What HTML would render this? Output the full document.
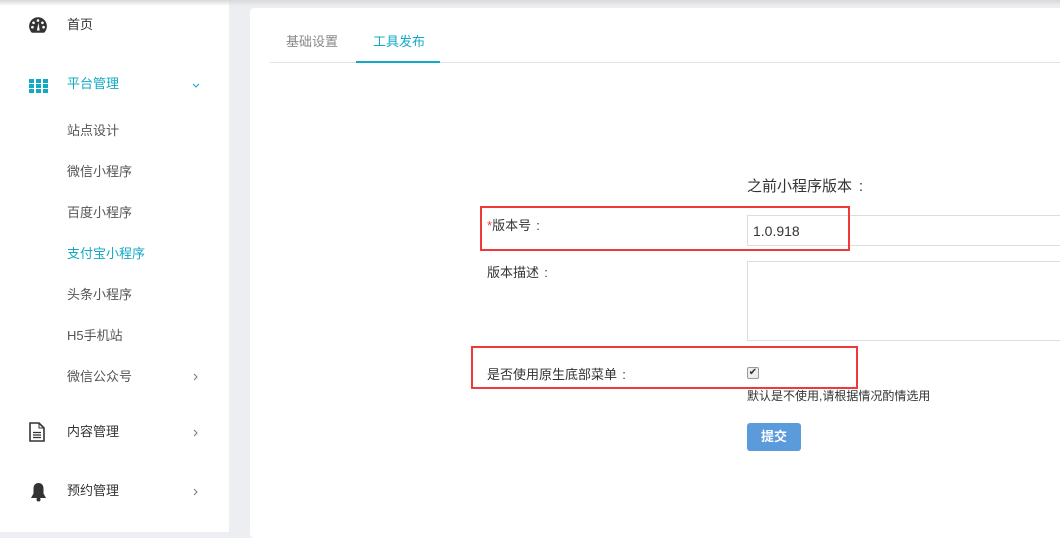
<!DOCTYPE html>
<html><head><meta charset="utf-8"><style>
*{margin:0;padding:0;box-sizing:border-box}
body{width:1060px;height:532px;overflow:hidden;background:#eceef2;font-family:"Liberation Sans","Noto Sans CJK SC",sans-serif;font-size:13px;color:#333;position:relative;line-height:18px}
.side{position:absolute;left:0;top:0;width:229px;height:532px;background:#fff}
.shadow{position:absolute;left:0;top:0;width:1060px;height:6px;background:linear-gradient(#d8d8d8,rgba(236,238,242,0));}
.it{position:absolute;left:67px;font-size:13px;color:#333}
.sub{position:absolute;left:67px;font-size:13px;color:#555}
.arr{position:absolute;left:193px}
.panel{position:absolute;left:250px;top:8px;width:820px;height:530px;background:#fff;border-radius:4px}
.abs{position:absolute}
.red{position:absolute;border:2px solid #f03a3a}
.c{display:inline-block;width:14px;text-align:center}
</style></head><body>
<div class="side">
<svg class="abs" style="left:28px;top:16px" width="20" height="18" viewBox="0 0 18 16"><path d="M9 1a8 8 0 0 0-8 8c0 2.5 1 4.5 2.5 6h11C16 13.5 17 11.5 17 9a8 8 0 0 0-8-8z" fill="#333"/><circle cx="5" cy="6" r="1.2" fill="#fff"/><circle cx="9" cy="4" r="1.2" fill="#fff"/><circle cx="13" cy="6" r="1.2" fill="#fff"/><circle cx="4" cy="10" r="1.2" fill="#fff"/><circle cx="14" cy="10" r="1.2" fill="#fff"/><path d="M8 13l1.5-7 1 7z" fill="#fff"/></svg>
<div class="it" style="top:16px">首页</div>
<svg class="abs" style="left:29px;top:79px" width="19" height="14"><g fill="#12a9c4"><rect x="0" y="0" width="5" height="4"/><rect x="7" y="0" width="5" height="4"/><rect x="14" y="0" width="5" height="4"/><rect x="0" y="5" width="5" height="4"/><rect x="7" y="5" width="5" height="4"/><rect x="14" y="5" width="5" height="4"/><rect x="0" y="10" width="5" height="4"/><rect x="7" y="10" width="5" height="4"/><rect x="14" y="10" width="5" height="4"/></g></svg>
<div class="it" style="top:75px;color:#12a9c4">平台管理</div>
<svg class="abs" style="left:192px;top:83px" width="8" height="6"><path d="M1 1l3 3 3-3" stroke="#12a9c4" fill="none"/></svg>
<div class="sub" style="top:122px">站点设计</div>
<div class="sub" style="top:163px">微信小程序</div>
<div class="sub" style="top:204px">百度小程序</div>
<div class="sub" style="top:245px;color:#12a9c4">支付宝小程序</div>
<div class="sub" style="top:286px">头条小程序</div>
<div class="sub" style="top:327px">H5手机站</div>
<div class="sub" style="top:368px">微信公众号</div>
<svg class="arr" style="top:373px" width="6" height="8"><path d="M1 1l3 3-3 3" stroke="#777" fill="none"/></svg>
<svg class="abs" style="left:29px;top:422px" width="17" height="20"><path d="M1 1h9l5 5v13H1z" fill="none" stroke="#333" stroke-width="1.6"/><path d="M10 1v5h5" fill="none" stroke="#333"/><path d="M4 10.5h8M4 13h8M4 15.5h8" stroke="#333" stroke-width="1.2"/></svg>
<div class="it" style="top:423px">内容管理</div>
<svg class="arr" style="top:429px" width="6" height="8"><path d="M1 1l3 3-3 3" stroke="#777" fill="none"/></svg>
<svg class="abs" style="left:29px;top:482px" width="19" height="20"><path d="M9.5 1c-3 0-5 2.2-5 5.5v5L2 16h15l-2.5-4.5v-5C14.5 3.2 12.5 1 9.5 1z" fill="#333"/><circle cx="9.5" cy="17.5" r="2" fill="#333"/></svg>
<div class="it" style="top:482px">预约管理</div>
<svg class="arr" style="top:488px" width="6" height="8"><path d="M1 1l3 3-3 3" stroke="#777" fill="none"/></svg>
</div>
<div class="shadow"></div>
<div class="panel">
<div class="abs" style="left:20px;top:54px;width:800px;height:1px;background:#e1e3e6"></div>
<div class="abs" style="left:36px;top:25px;color:#888">基础设置</div>
<div class="abs" style="left:123px;top:25px;color:#12a9c4">工具发布</div>
<div class="abs" style="left:106px;top:53px;width:84px;height:2px;background:#12a9c4"></div>
</div>
<div class="abs" style="left:747px;top:178px;font-size:15px;color:#333">之前小程序版本<span class="c" style="width:18px">:</span></div>
<div class="abs" style="left:487px;top:217px"><span style="color:#f03a3a">*</span>版本号<span class="c">:</span></div>
<div class="abs" style="left:747px;top:215px;width:320px;height:31px;border:1px solid #ddd;padding:6px 5px;font-size:14px">1.0.918</div>
<div class="abs" style="left:487px;top:264px">版本描述<span class="c">:</span></div>
<div class="abs" style="left:747px;top:261px;width:320px;height:80px;border:1px solid #ddd"></div>
<div class="abs" style="left:487px;top:366px">是否使用原生底部菜单<span class="c">:</span></div>
<div class="abs" style="left:747px;top:367px;width:12px;height:12px;border:1px solid #999;border-radius:2px;background:#eee;font-size:10px;line-height:10px;text-align:center">✔</div>
<div class="abs" style="left:747px;top:387px;font-size:12px">默认是不使用,请根据情况酌情选用</div>
<div class="abs" style="left:747px;top:423px;width:54px;height:28px;background:#5b9bdc;border-radius:3px;color:#fff;text-align:center;line-height:28px;font-weight:bold">提交</div>
<div class="red" style="left:480px;top:206px;width:370px;height:45px"></div>
<div class="red" style="left:471px;top:346px;width:387px;height:43px"></div>
</body></html>
